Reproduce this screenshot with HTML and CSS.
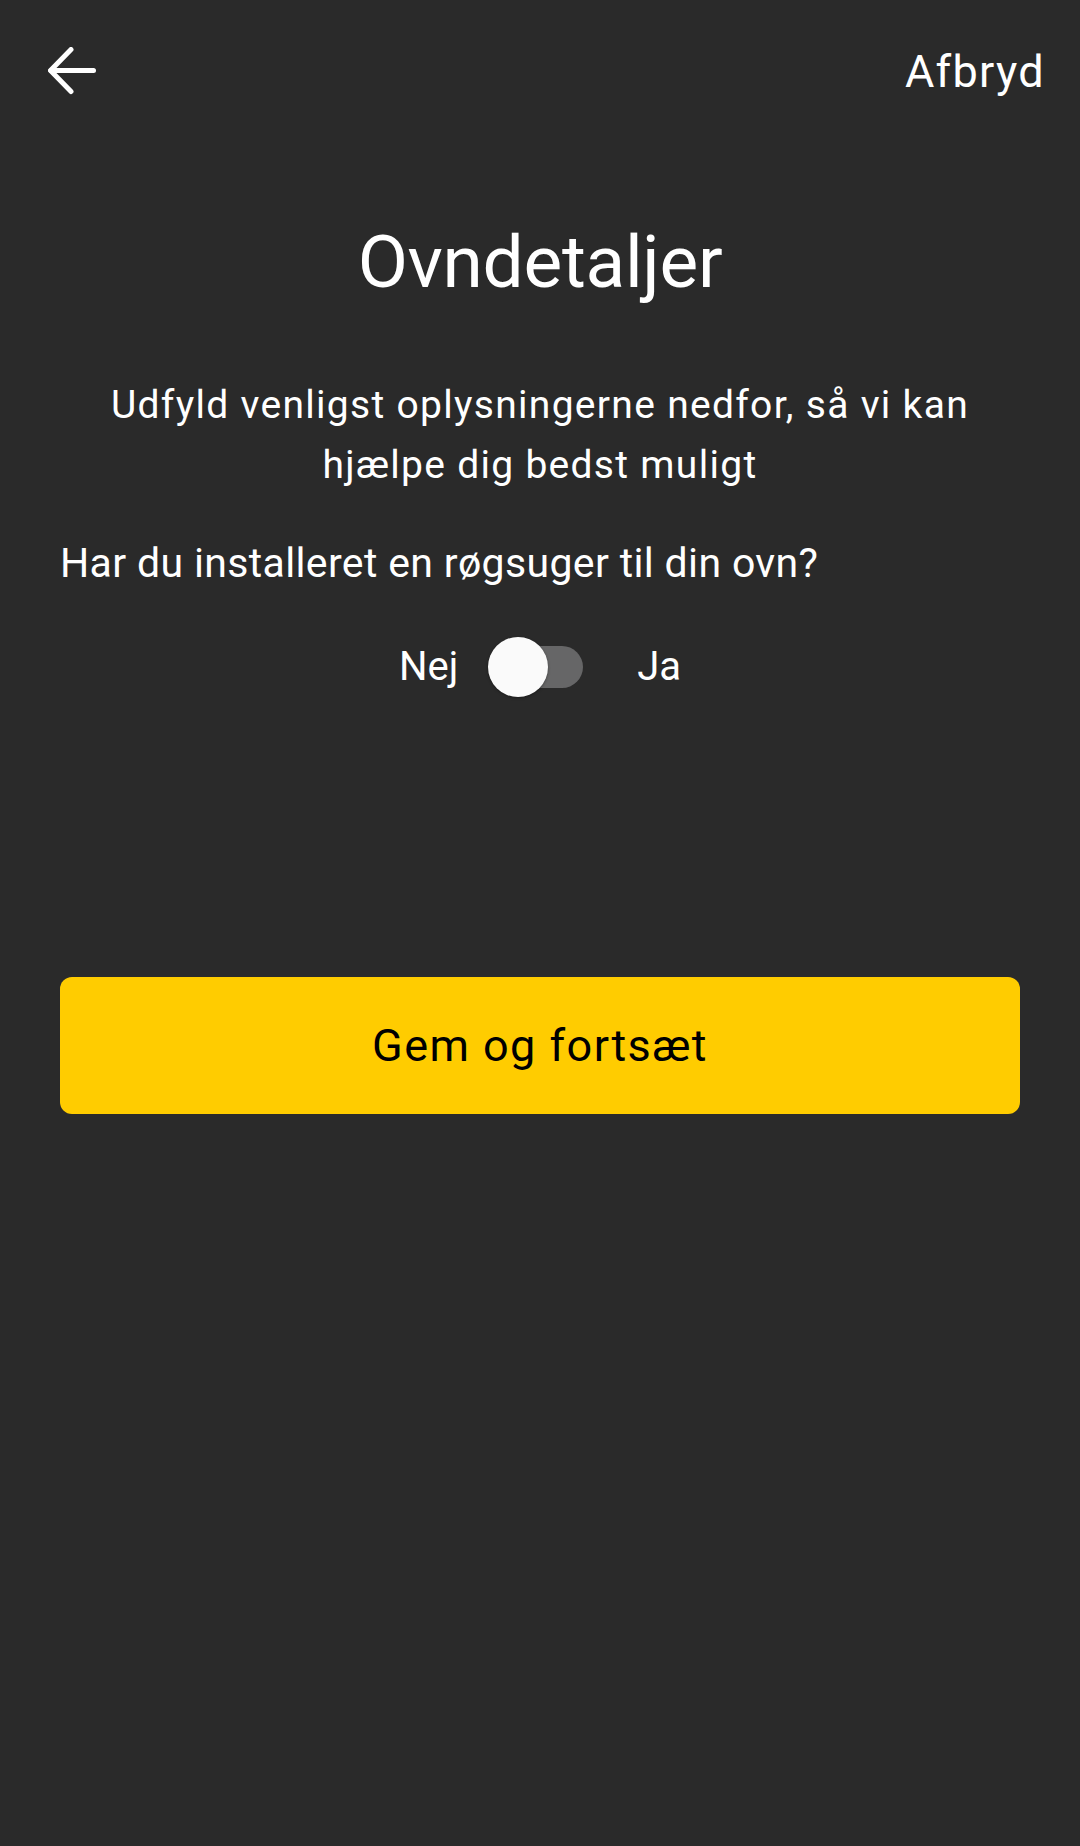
FILE: index.html
```html
<!DOCTYPE html>
<html lang="da">
<head>
<meta charset="utf-8">
<title>Ovndetaljer</title>
<link rel="stylesheet" href="styles.css">
</head>
<body>
<div class="screen">
  <header class="topbar">
    <button class="back" aria-label="Tilbage">
      <svg width="48" height="48" viewBox="0 0 48 48" fill="none" stroke="#ffffff" stroke-width="5" stroke-linecap="round" stroke-linejoin="round">
        <path d="M45.5 23.5H3"/>
        <path d="M23 2.5L2.5 23.5L23 44.5"/>
      </svg>
    </button>
    <span class="cancel">Afbryd</span>
  </header>
  <main class="content">
    <h1 class="title">Ovndetaljer</h1>
    <p class="subtitle">Udfyld venligst oplysningerne nedfor, så vi kan hjælpe dig bedst muligt</p>
    <p class="question">Har du installeret en røgsuger til din ovn?</p>
    <div class="toggle-row">
      <span class="opt opt-no">Nej</span>
      <span class="switch"><span class="track"></span><span class="thumb"></span></span>
      <span class="opt opt-yes">Ja</span>
    </div>
    <button class="primary">Gem og fortsæt</button>
  </main>
</div>
</body>
</html>
```
FILE: styles.css
```css
html, body {
  margin: 0;
  padding: 0;
  background: #2a2a2a;
}
body {
  font-family: Roboto, "Noto Sans", "Liberation Sans", sans-serif;
  color: #ffffff;
}
.screen {
  width: 1080px;
  min-height: 1846px;
  background: #2a2a2a;
}
.topbar {
  display: flex;
  justify-content: space-between;
  align-items: flex-start;
  padding: 45px 36px 0 48px;
  height: 53px;
}
.back {
  margin-top: 2px;
  padding: 0;
  border: 0;
  background: none;
  width: 48px;
  height: 48px;
  display: block;
}
.back svg { display: block; }
.cancel {
  font-size: 45px;
  line-height: 53px;
  letter-spacing: 1.3px;
  margin-right: -1px;
  color: #ffffff;
}
.content {
  padding: 0 60px;
  display: flex;
  flex-direction: column;
}
.title {
  margin: 119px 0 0;
  font-size: 73px;
  line-height: 90px;
  letter-spacing: -0.3px;
  font-weight: 400;
  text-align: center;
}
.subtitle {
  margin: 68px 0 0;
  font-size: 39px;
  line-height: 60px;
  letter-spacing: 1.3px;
  text-align: center;
  padding: 0 30px;
}
.question {
  margin: 44px 0 0;
  font-size: 41px;
  line-height: 48px;
  letter-spacing: 0.35px;
}
.toggle-row {
  margin-top: 50px;
  display: flex;
  justify-content: center;
  align-items: center;
  height: 60px;
}
.opt {
  font-size: 40px;
  line-height: 60px;
}
.opt-no { margin-right: 30px; }
.opt-yes { margin-left: 54px; }
.switch {
  position: relative;
  width: 95px;
  height: 60px;
  display: block;
}
.track {
  position: absolute;
  left: 2px;
  top: 9px;
  width: 93px;
  height: 42px;
  border-radius: 21px;
  background: #666667;
}
.thumb {
  position: absolute;
  left: 0;
  top: 0;
  width: 60px;
  height: 60px;
  border-radius: 50%;
  background: #fafafa;
  box-shadow: 0 1px 3px rgba(0,0,0,0.35);
}
.primary {
  margin-top: 280px;
  height: 137px;
  width: 100%;
  border: 0;
  border-radius: 12px;
  background: #ffcc00;
  color: #000000;
  font-family: Roboto, "Noto Sans", "Liberation Sans", sans-serif;
  font-size: 45px;
  line-height: 52px;
  letter-spacing: 1.45px;
}
```
